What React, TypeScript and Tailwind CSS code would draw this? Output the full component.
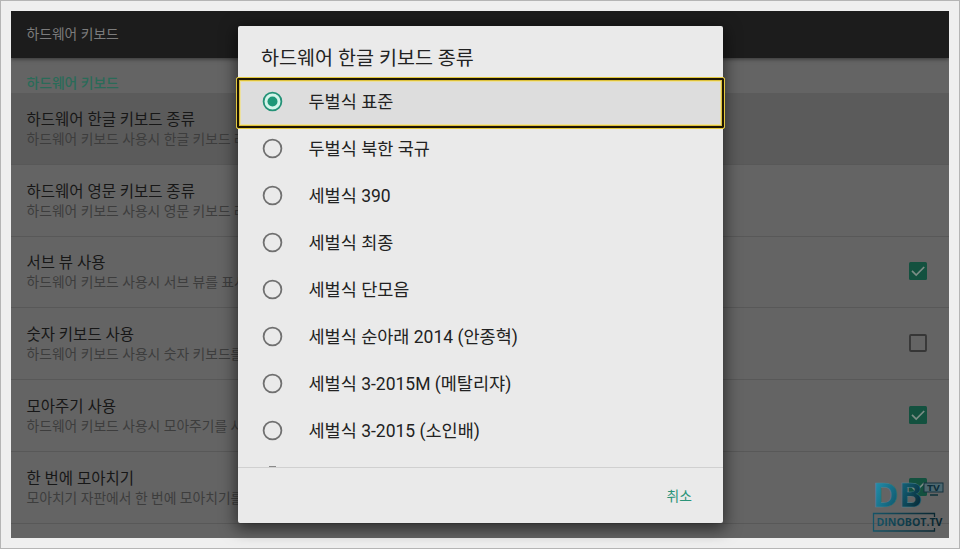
import { useState } from "react";

const settings = [
  { title: "하드웨어 한글 키보드 종류", summary: "하드웨어 키보드 사용시 한글 키보드 레", active: true },
  { title: "하드웨어 영문 키보드 종류", summary: "하드웨어 키보드 사용시 영문 키보드 레" },
  { title: "서브 뷰 사용", summary: "하드웨어 키보드 사용시 서브 뷰를 표시", checked: true },
  { title: "숫자 키보드 사용", summary: "하드웨어 키보드 사용시 숫자 키보드를", checked: false },
  { title: "모아주기 사용", summary: "하드웨어 키보드 사용시 모아주기를 사", checked: true },
  { title: "한 번에 모아치기", summary: "모아치기 자판에서 한 번에 모아치기를", checked: true },
];

const layouts = [
  "두벌식 표준",
  "두벌식 북한 국규",
  "세벌식 390",
  "세벌식 최종",
  "세벌식 단모음",
  "세벌식 순아래 2014 (안종혁)",
  "세벌식 3-2015M (메탈리쟈)",
  "세벌식 3-2015 (소인배)",
];

const Checkbox = ({ checked }: { checked: boolean }) => (
  <svg width="18" height="18" viewBox="0 0 18 18" fill="none" className="mb-px shrink-0">
    {checked ? (
      <>
        <rect width="18" height="18" rx="1.5" fill="#13513f" />
        <path d="M3 8.800l4.200 4.200L15.200 5" stroke="#7b8d86" strokeWidth="1.7" />
      </>
    ) : (
      <rect x="1" y="1" width="16" height="16" rx="1" stroke="#363636" strokeWidth="1.8" />
    )}
  </svg>
);

const Radio = ({ checked }: { checked: boolean }) => (
  <svg width="20" height="20" viewBox="0.5 0.5 20 20" fill="none" className="shrink-0 overflow-visible">
    <circle cx="10" cy="10" r="8.9" fill={checked ? "#d3f5ea" : "none"} stroke={checked ? "#249277" : "#707070"} strokeWidth="1.8" />
    {checked && <circle cx="10" cy="10" r="5" fill="#1d9777" />}
  </svg>
);

const Logo = () => (
  <svg width="76" height="56" viewBox="0 0 76 56" className="absolute top-[467px] left-[860px] overflow-visible">
    <defs>
      <linearGradient id="brand" gradientUnits="userSpaceOnUse" x1="0" x2="52" y1="0" y2="26">
        <stop offset="0" stopColor="#2699b8" />
        <stop offset="0.5" stopColor="#14647b" />
        <stop offset="1" stopColor="#062631" />
      </linearGradient>
      <linearGradient id="band" gradientUnits="userSpaceOnUse" x1="0" x2="70" y1="0" y2="0">
        <stop offset="0" stopColor="#15566a" />
        <stop offset="1" stopColor="#08222b" />
      </linearGradient>
    </defs>
    <text x="1.500" y="28.500" fontFamily="Open Sans" fontWeight="700" fontSize="34.500" textLength="50" lengthAdjust="spacingAndGlyphs" fill="url(#brand)" stroke="#4f8493" strokeWidth="0.3">DB</text>
    <rect x="53" y="5" width="19" height="9" fill="#4e6870" stroke="#17333e" />
    <path d="M59 17h8" stroke="#0d3038" strokeWidth="1.5" />
    <text x="56" y="12.500" fontFamily="Open Sans" fontWeight="700" fontSize="8" textLength="13" lengthAdjust="spacingAndGlyphs" fill="#0c2c38">TV</text>
    <path d="M63.500 39v-3.500H2.500v17.500h61v-3" fill="none" stroke="url(#band)" strokeWidth="1.3" />
    <text x="5.500" y="48" fontFamily="Open Sans" fontWeight="700" fontSize="10" textLength="66" lengthAdjust="spacingAndGlyphs" fill="url(#band)">DINOBOT.TV</text>
  </svg>
);

const App = () => {
  const [selected, setSelected] = useState(0);

  return (
    <div className="h-[549px] w-[960px] overflow-hidden border border-[#b5b5b5] bg-[#efefef] p-[10px] font-[Roboto,'Noto_Sans_CJK_KR',sans-serif]">
      <div className="relative h-[527px] w-[938px] bg-[#646464]">
        {/* Settings screen behind the dialog */}
        <div className="flex h-full flex-col overflow-hidden">
          <header className="flex h-[47px] shrink-0 items-center bg-[#1c1c1c] pl-[15.5px] text-[13.8px] text-[#7c7c7c] shadow-[0_1px_4px_rgba(0,0,0,0.5)]">
            하드웨어 키보드
          </header>
          <h2 className="flex h-[35px] shrink-0 items-center pt-[16px] pl-[15.5px] text-[13.8px] font-medium text-[#2a6b58]">
            하드웨어 키보드
          </h2>
          {settings.map((item) => (
            <div
              key={item.title}
              className={`flex h-[71.8px] shrink-0 items-center justify-between border-b border-[#585858] pr-[22px] pl-[15.5px] whitespace-nowrap ${
                item.active ? "bg-[#5b5b5b]" : ""
              }`}
            >
              <div className="pt-[3px]">
                <div className="text-[15.5px] leading-[19px] text-[#171717]">{item.title}</div>
                <div className="text-[13.8px] leading-[19px] text-[#3d3d3d]">{item.summary}</div>
              </div>
              {item.checked !== undefined && <Checkbox checked={item.checked} />}
            </div>
          ))}
        </div>

        {/* Dialog */}
        <div className="absolute top-[15px] left-[227px] flex h-[497px] w-[485px] flex-col rounded-[2px] bg-[#eaeaea] shadow-[0_4px_16px_2px_rgba(0,0,0,0.55)]">
          <h1 className="flex h-[52px] shrink-0 items-center pt-[13px] pl-[23px] text-[19.6px] text-[#222]">
            하드웨어 한글 키보드 종류
          </h1>
          <div className="relative flex h-[390px] shrink-0 flex-col border-b border-[#d0d0d0]">
            {/* focus ring around the first row */}
            <div className="pointer-events-none absolute -top-[1px] -left-[2px] h-[52px] w-[489px] rounded-[2px] border border-[#e3c93f] bg-[#dddddd] shadow-[inset_0_0_0_2px_#1d1503,inset_0_0_0_3px_#dcc03a,inset_0_0_0_4px_#ece0a0]" />
            {layouts.map((name, i) => (
              <button
                key={name}
                onClick={() => setSelected(i)}
                className="relative flex h-[47px] shrink-0 items-center gap-[25.5px] pl-[25px] text-left text-[17.5px] text-[#222]"
              >
                <Radio checked={selected === i} />
                <span className="pt-[2px]">{name}</span>
              </button>
            ))}
            {/* top edge of the next radio button */}
            <div className="mt-auto ml-[31px] h-px w-[7px] bg-[#8a8a8a]" />
          </div>
          <div className="flex flex-1 items-center justify-end pt-px pr-[31px] text-[13.8px] text-[#2b9479]">
            취소
          </div>
        </div>

        <Logo />
      </div>
    </div>
  );
};

export default App;
